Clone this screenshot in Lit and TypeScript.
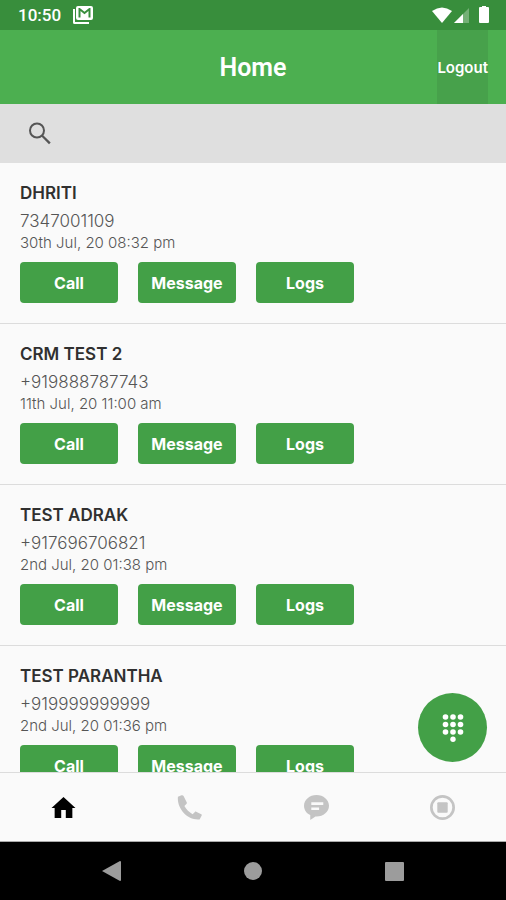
import { LitElement, html, css, svg, nothing } from "lit";
import { customElement, property } from "lit/decorators.js";

interface Contact {
  name: string;
  phone: string;
  date: string;
}

const contacts: Contact[] = [
  { name: "DHRITI", phone: "7347001109", date: "30th Jul, 20 08:32 pm" },
  { name: "CRM TEST 2", phone: "+919888787743", date: "11th Jul, 20 11:00 am" },
  { name: "TEST ADRAK", phone: "+917696706821", date: "2nd Jul, 20 01:38 pm" },
  { name: "TEST PARANTHA", phone: "+919999999999", date: "2nd Jul, 20 01:36 pm" },
];

const tabs = [
  {
    label: "Home",
    shape: svg`<path d="M12 2 .500 12.500h3V22h6.300v-7.500h4.400V22h6.300v-9.500h3z"/>`,
  },
  {
    label: "Calls",
    shape: svg`<path d="M4.300.300.900 1.600C-.300 13.100 10.200 24.600 21.700 23.400l2-3.700c.200-.500 0-1-.400-1.200l-4.900-2.500c-.400-.200-.900-.100-1.200.300l-2.200 2.100c-3.300-1.900-6-4.600-7.900-7.900l2.100-2.200c.300-.300.400-.700.200-1.100L6.300.900C5.900.200 5 0 4.300.300z"/>`,
  },
  {
    label: "Messages",
    shape: svg`<path fill-rule="evenodd" d="M12 0C5.400 0 0 4.600 0 10.300c0 3.800 2.300 7.200 6 9V24l5-3.400h1c6.600 0 12-4.600 12-10.300S18.600 0 12 0zM7 7h11.500v2.500H7zm0 5h7.500v2.500H7z"/>`,
  },
  {
    label: "Record",
    shape: svg`<circle cx="12" cy="12" r="10.700" fill="none" stroke="currentColor" stroke-width="2.600"/><rect x="7" y="7" width="10" height="10" rx="1"/>`,
  },
];

@customElement("status-bar")
class StatusBar extends LitElement {
  static styles = css`
    :host {
      display: flex;
      align-items: center;
      justify-content: space-between;
      height: 30px;
      padding: 0 16px 0 18px;
      background: #388e3c;
      color: #fff;
      font: 500 17px/32px Roboto, sans-serif;
    }
    .side {
      display: flex;
      align-items: center;
      gap: 12px;
    }
    .signals {
      gap: 2px;
    }
    svg {
      display: block;
      fill: currentColor;
    }
  `;

  render() {
    return html`
      <div class="side">
        <time>10:50</time>
        <svg width="20" height="18" viewBox="0 0 20 18" aria-hidden="true">
          <path d="M0 3h2v13h14v2H1.500Q0 18 0 16.500z" />
          <path fill-rule="evenodd" d="M5 0h13q2 0 2 2v10q0 2-2 2H5q-2 0-2-2V2q0-2 2-2zM5.500 11.500h2V5l4 3.200 4-3.200v6.500h2V2h-1.300l-4.700 3.800L6.800 2H5.500z" />
        </svg>
      </div>
      <div class="side signals">
        <svg width="20" height="16" viewBox="0 0 20 16" aria-hidden="true">
          <path d="M0 4Q10-3 20 4L10 16z" />
        </svg>
        <svg width="16" height="16" viewBox="0 0 16 16" aria-hidden="true">
          <path opacity=".3" d="M15 1v15H0z" />
          <path d="M9 7v9H0z" />
        </svg>
        <svg width="18" height="18" viewBox="0 0 18 18" aria-hidden="true">
          <path d="M10 1V0h4v1h2q1 0 1 1v14q0 1-1 1H8q-1 0-1-1V2q0-1 1-1z" />
        </svg>
      </div>
    `;
  }
}

@customElement("contact-card")
class ContactCard extends LitElement {
  @property({ attribute: false }) contact!: Contact;

  static styles = css`
    :host {
      display: block;
      padding: 18px 20px 20px;
      border-bottom: 1px solid #dcdcdc;
    }
    .name {
      margin: 0 0 4px;
      color: #303030;
      font-size: 17px;
      font-weight: 600;
      line-height: 24px;
    }
    .phone,
    .date {
      margin: 0;
      color: #555;
      font-size: 17px;
      font-weight: 300;
      line-height: 24px;
    }
    .date {
      font-size: 15px;
      line-height: 20px;
    }
    .actions {
      display: flex;
      gap: 20px;
      margin-top: 9px;
    }
    .action {
      width: 98px;
      height: 41px;
      padding: 0;
      border: 0;
      border-radius: 4px;
      background: #43a047;
      color: #fff;
      font: inherit;
      font-size: 16px;
      font-weight: 700;
    }
  `;

  render() {
    const { name, phone, date } = this.contact;
    return html`
      <h2 class="name">${name}</h2>
      <p class="phone">${phone}</p>
      <p class="date">${date}</p>
      <div class="actions">
        ${["Call", "Message", "Logs"].map(
          (label) => html`<button class="action" type="button">${label}</button>`
        )}
      </div>
    `;
  }
}

@customElement("app-root")
class AppRoot extends LitElement {
  static styles = css`
    :host {
      display: flex;
      flex-direction: column;
      height: 100vh;
      background: #fafafa;
      font-family: Inter, sans-serif;
    }
    svg {
      display: block;
      fill: currentColor;
    }
    button {
      padding: 0;
      border: 0;
      background: none;
      font: inherit;
    }
    .header {
      display: grid;
      grid-template-columns: 1fr auto 1fr;
      align-items: center;
      height: 74px;
      padding: 0 18px;
      background: #4caf50;
      color: #fff;
    }
    .title {
      grid-column: 2;
      margin: 0;
      padding-top: 2px;
      font: 600 25px/32px Roboto, sans-serif;
    }
    .logout {
      justify-self: end;
      height: 100%;
      background: #47a14b;
      color: #fff;
      font-size: 15px;
      font-weight: 600;
    }
    .search {
      display: flex;
      align-items: center;
      gap: 8px;
      height: 59px;
      padding: 0 12px 0 28px;
      background: #dfdfdf;
      color: #555;
    }
    .field {
      flex: 1;
      min-width: 0;
      height: 56px;
      border: 0;
      outline: 0;
      background: none;
      color: #303030;
      font: inherit;
      font-size: 16px;
    }
    .main {
      display: flex;
      flex: 1;
      min-height: 0;
      position: relative;
    }
    .list {
      flex: 1;
      margin: 0;
      padding: 0;
      overflow-y: auto;
      scrollbar-width: none;
      list-style: none;
    }
    .dial {
      position: absolute;
      right: 19px;
      bottom: 10px;
      display: grid;
      place-items: center;
      width: 69px;
      height: 69px;
      border-radius: 50%;
      background: #43a047;
      color: #fff;
    }
    .tabs {
      display: grid;
      grid-template-columns: repeat(4, 1fr);
      height: 68px;
      border-top: 1px solid #dcdcdc;
      border-bottom: 1px solid #aaa;
    }
    .tab {
      display: grid;
      place-items: center;
      color: #c4c4c4;
    }
    .tab[aria-current] {
      color: #000;
    }
    .system {
      display: grid;
      grid-template-columns: repeat(3, 1fr);
      height: 58px;
      padding: 0 42px;
      background: #000;
    }
    .key {
      display: grid;
      place-items: center;
      color: #9c9c9c;
    }
  `;

  render() {
    return html`
      <status-bar></status-bar>
      <header class="header">
        <h1 class="title">Home</h1>
        <button class="logout" type="button">Logout</button>
      </header>
      <label class="search">
        <svg width="24" height="24" viewBox="0 0 24 24" role="img" aria-label="Search">
          <circle cx="9" cy="8.500" r="7" fill="none" stroke="currentColor" stroke-width="2" />
          <path d="m13.200 14.200 1.500-1.500 8 7.800-1.700 1.700z" />
        </svg>
        <input class="field" type="search" />
      </label>
      <main class="main">
        <ul class="list">
          ${contacts.map(
            (contact) => html`<li><contact-card .contact=${contact}></contact-card></li>`
          )}
        </ul>
        <button class="dial" type="button" aria-label="Dial pad">
          <svg width="22" height="28" viewBox="0 0 22 28" aria-hidden="true">
            ${[3, 10.5, 18].map((y) =>
              [3.5, 11, 18.5].map((x) => svg`<circle cx=${x} cy=${y} r="2.800" />`)
            )}
            <circle cx="11" cy="25.300" r="2.700" />
          </svg>
        </button>
      </main>
      <nav class="tabs">
        ${tabs.map(
          (tab, index) => html`
            <button
              class="tab"
              type="button"
              aria-label=${tab.label}
              aria-current=${index === 0 ? "page" : nothing}
            >
              <svg width="25" height="25" viewBox="0 0 24 24" aria-hidden="true">${tab.shape}</svg>
            </button>
          `
        )}
      </nav>
      <div class="system">
        <button class="key" type="button" aria-label="Back">
          <svg width="20" height="22" viewBox="0 0 20 22"><path d="M0 11 18 1q1 0 1 1v18q0 1-1 1z" /></svg>
        </button>
        <button class="key" type="button" aria-label="Home screen">
          <svg width="20" height="20" viewBox="0 0 20 20"><circle cx="10" cy="10" r="9" /></svg>
        </button>
        <button class="key" type="button" aria-label="Recent apps">
          <svg width="20" height="20" viewBox="0 0 20 20"><rect width="19" height="19" x="1" y="1" rx="1" /></svg>
        </button>
      </div>
    `;
  }
}
